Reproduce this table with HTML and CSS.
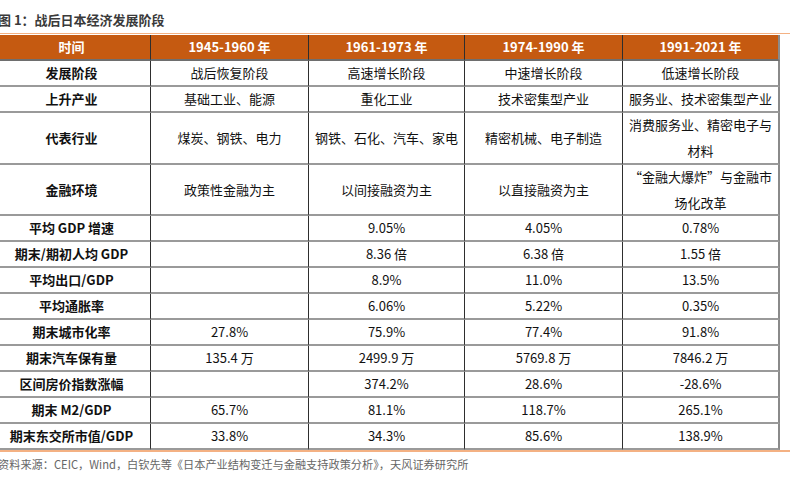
FILE: index.html
```html
<!DOCTYPE html>
<html lang="zh-CN">
<head>
<meta charset="utf-8">
<link rel="stylesheet" href="styles.css">
</head>
<body>
<div class="page">
  <div class="title">图 1：战后日本经济发展阶段</div>
  <div class="rule rule-top"></div>
  <div class="grid">
    <div class="c h">时间</div>
    <div class="c h">1945-1960 年</div>
    <div class="c h">1961-1973 年</div>
    <div class="c h">1974-1990 年</div>
    <div class="c h last">1991-2021 年</div>

    <div class="c k">发展阶段</div>
    <div class="c">战后恢复阶段</div>
    <div class="c">高速增长阶段</div>
    <div class="c">中速增长阶段</div>
    <div class="c last">低速增长阶段</div>

    <div class="c k">上升产业</div>
    <div class="c">基础工业、能源</div>
    <div class="c">重化工业</div>
    <div class="c">技术密集型产业</div>
    <div class="c last">服务业、技术密集型产业</div>

    <div class="c k">代表行业</div>
    <div class="c">煤炭、钢铁、电力</div>
    <div class="c">钢铁、石化、汽车、家电</div>
    <div class="c">精密机械、电子制造</div>
    <div class="c last">消费服务业、精密电子与<br>材料</div>

    <div class="c k">金融环境</div>
    <div class="c">政策性金融为主</div>
    <div class="c">以间接融资为主</div>
    <div class="c">以直接融资为主</div>
    <div class="c last">“金融大爆炸”与金融市<br>场化改革</div>

    <div class="c k">平均 GDP 增速</div>
    <div class="c"></div>
    <div class="c">9.05%</div>
    <div class="c">4.05%</div>
    <div class="c last">0.78%</div>

    <div class="c k">期末/期初人均 GDP</div>
    <div class="c"></div>
    <div class="c">8.36 倍</div>
    <div class="c">6.38 倍</div>
    <div class="c last">1.55 倍</div>

    <div class="c k">平均出口/GDP</div>
    <div class="c"></div>
    <div class="c">8.9%</div>
    <div class="c">11.0%</div>
    <div class="c last">13.5%</div>

    <div class="c k">平均通胀率</div>
    <div class="c"></div>
    <div class="c">6.06%</div>
    <div class="c">5.22%</div>
    <div class="c last">0.35%</div>

    <div class="c k">期末城市化率</div>
    <div class="c">27.8%</div>
    <div class="c">75.9%</div>
    <div class="c">77.4%</div>
    <div class="c last">91.8%</div>

    <div class="c k">期末汽车保有量</div>
    <div class="c">135.4 万</div>
    <div class="c">2499.9 万</div>
    <div class="c">5769.8 万</div>
    <div class="c last">7846.2 万</div>

    <div class="c k">区间房价指数涨幅</div>
    <div class="c"></div>
    <div class="c">374.2%</div>
    <div class="c">28.6%</div>
    <div class="c last">-28.6%</div>

    <div class="c k">期末 M2/GDP</div>
    <div class="c">65.7%</div>
    <div class="c">81.1%</div>
    <div class="c">118.7%</div>
    <div class="c last">265.1%</div>

    <div class="c k">期末东交所市值/GDP</div>
    <div class="c">33.8%</div>
    <div class="c">34.3%</div>
    <div class="c">85.6%</div>
    <div class="c last">138.9%</div>
  </div>
  <div class="rule rule-bottom"></div>
  <div class="source">资料来源：CEIC，Wind，白钦先等《日本产业结构变迁与金融支持政策分析》，天风证券研究所</div>
</div>
</body>
</html>
```

FILE: styles.css
```css
html, body {
  margin: 0;
  padding: 0;
  background: #ffffff;
}

body {
  font-family: "Noto Sans CJK SC", "Microsoft YaHei", "Noto Sans", sans-serif;
  color: #111111;
}

.page {
  width: 796px;
  height: 489px;
  overflow: hidden;
}

.title {
  box-sizing: border-box;
  height: 33px;
  padding-top: 11px;
  margin-left: -2px;
  font-size: 13px;
  line-height: 18px;
  font-weight: 700;
  color: #3a3a3a;
  white-space: nowrap;
}

.rule {
  width: 790px;
  height: 1px;
  background: #f4b183;
}

.rule-top {
  margin-bottom: 1px;
}

.rule-bottom {
  height: 2px;
  background: #f4b183;
}

.grid {
  display: grid;
  margin-left: -7px;
  width: 787px;
  grid-template-columns: 158px 158px 156px 158px 157px;
  grid-template-rows: 26px 26px 26px 52px 51px repeat(9, 26px);
}

.c {
  box-sizing: border-box;
  display: flex;
  align-items: center;
  justify-content: center;
  text-align: center;
  padding: 0 4px;
  font-size: 13px;
  line-height: 26px;
  border-right: 1px solid #2e2e2e;
  border-bottom: 2px solid #9a9a9a;
  white-space: nowrap;
}

.c.last {
  border-right: 2px solid #8a8a8a;
}

.h {
  background: #c55a11;
  color: #ffffff;
  font-weight: 700;
  border-bottom-color: #6e6e6e;
}

.k {
  font-weight: 700;
  color: #111111;
}

.source {
  margin-top: 4px;
  margin-left: -2px;
  font-size: 11.2px;
  line-height: 16px;
  color: #666666;
  white-space: nowrap;
}
```
